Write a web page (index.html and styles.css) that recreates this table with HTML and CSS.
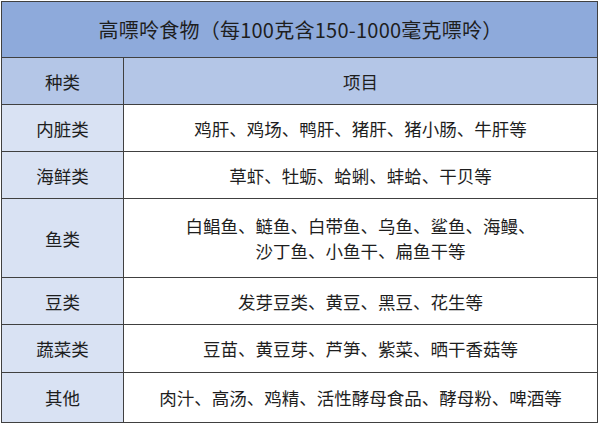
FILE: index.html
```html
<!DOCTYPE html>
<html lang="zh-CN">
<head>
<meta charset="utf-8">
<title>高嘌呤食物</title>
<link rel="stylesheet" href="styles.css">
</head>
<body>
<div class="table">
  <div class="cell title">高嘌呤食物（每100克含150-1000毫克嘌呤）</div>
  <div class="cell head">种类</div>
  <div class="cell head">项目</div>
  <div class="cell cat">内脏类</div>
  <div class="cell item">鸡肝、鸡场、鸭肝、猪肝、猪小肠、牛肝等</div>
  <div class="cell cat">海鲜类</div>
  <div class="cell item">草虾、牡蛎、蛤蜊、蚌蛤、干贝等</div>
  <div class="cell cat">鱼类</div>
  <div class="cell item">白鲳鱼、鲢鱼、白带鱼、乌鱼、鲨鱼、海鳗、<br>沙丁鱼、小鱼干、扁鱼干等</div>
  <div class="cell cat">豆类</div>
  <div class="cell item">发芽豆类、黄豆、黑豆、花生等</div>
  <div class="cell cat">蔬菜类</div>
  <div class="cell item">豆苗、黄豆芽、芦笋、紫菜、晒干香菇等</div>
  <div class="cell cat">其他</div>
  <div class="cell item">肉汁、高汤、鸡精、活性酵母食品、酵母粉、啤酒等</div>
</div>
</body>
</html>
```

FILE: styles.css
```css
html, body {
  margin: 0;
  padding: 0;
  background: #ffffff;
}

body {
  font-family: "Noto Sans CJK SC", "Noto Sans", sans-serif;
  color: #1e1e1e;
}

.table {
  margin: 1px 0 0 1px;
  width: 595px;
  padding: 1px;
  background: #404040;
  display: grid;
  grid-template-columns: 121px 473px;
  grid-template-rows: 55px 46px 46px 46px 78px 46px 47px 49px;
  gap: 1px;
}

.cell {
  display: flex;
  align-items: center;
  justify-content: center;
  text-align: center;
  background: #ffffff;
  font-size: 17.5px;
  line-height: 25px;
}

.title {
  grid-column: 1 / span 2;
  background: #8eaadb;
  font-size: 20px;
  letter-spacing: 0.25px;
  padding-left: 2px;
}

.head {
  background: #b4c6e7;
}

.cat {
  background: #d9e2f3;
}
```
